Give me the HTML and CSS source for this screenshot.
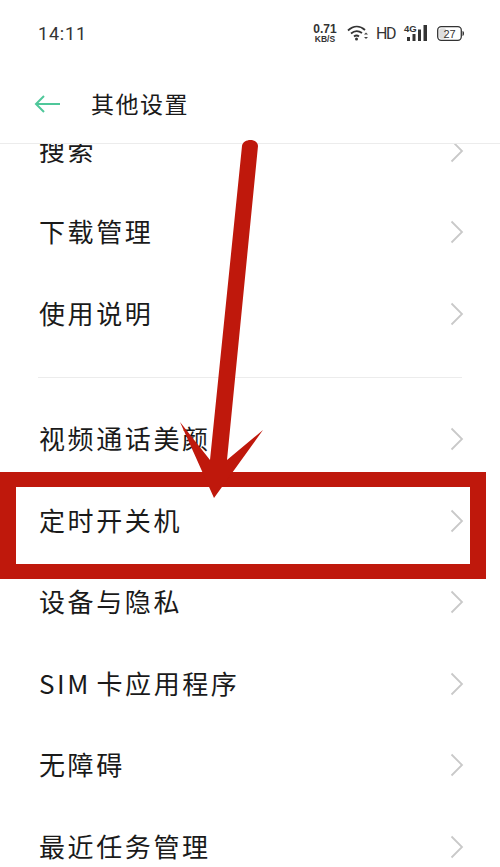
FILE: index.html
```html
<!DOCTYPE html>
<html lang="zh-CN">
<head>
<meta charset="utf-8">
<title>其他设置</title>
<link rel="stylesheet" href="styles.css">
</head>
<body>
<div class="phone">
  <div class="status">
    <span class="time">14:11</span>
    <div class="status-icons">
      <div class="speed"><b class="rate">0.71</b><b class="unit">KB/S</b></div>
      <svg class="wifi" width="22" height="16" viewBox="0 0 22 16"><path d="M1 5.500C6.500 0.500 13 0.500 18 5M4 8.500C7.500 5.500 11.500 5.500 15 8M7 11.500C8.500 10.300 10.500 10.300 12 11.500" fill="none" stroke="#333" stroke-width="1.800"/><circle cx="9.500" cy="14" r="1.500" fill="#333"/><path d="M17 9.500l2-2 2 2zM17 12l2 2 2-2z" fill="#444"/></svg>
      <span class="hd">HD</span>
      <div class="signal">
        <span class="g4">4G</span>
        <svg width="22" height="16" viewBox="0 0 22 16"><path d="M2 12h3v4H2zM7.500 9h3v7h-3zM13 4.500h3V16h-3zM18.500 0H22v16h-3.500z" fill="#333"/></svg>
      </div>
      <svg class="battery" width="27" height="15" viewBox="0 0 27 15"><rect x="0.700" y="0.700" width="23.600" height="13.600" rx="3.500" fill="none" stroke="#333" stroke-width="1.300"/><rect x="2.200" y="2.200" width="7" height="10.600" rx="2" fill="#ddd"/><path d="M25.500 5v5c1-.3 1.500-1.200 1.500-2.500s-.5-2.200-1.500-2.500z" fill="#333"/><text x="12.500" y="12" text-anchor="middle" class="batt-text">27</text></svg>
    </div>
  </div>
  <header class="bar">
    <svg class="back" width="28" height="20" viewBox="0 0 28 20"><path d="M27 10H3M11 2l-8 8 8 8" fill="none" stroke="#4fc79a" stroke-width="2"/></svg>
    <h1>其他设置</h1>
  </header>
  <main class="viewport">
    <div class="list">
      <div class="row"><span>搜索</span><svg class="chev" viewBox="0 0 14 24"><path d="M1.500 1.500L12 12 1.500 22.500"/></svg></div>
      <div class="row"><span>下载管理</span><svg class="chev" viewBox="0 0 14 24"><path d="M1.500 1.500L12 12 1.500 22.500"/></svg></div>
      <div class="row"><span>使用说明</span><svg class="chev" viewBox="0 0 14 24"><path d="M1.500 1.500L12 12 1.500 22.500"/></svg></div>
      <div class="divider"></div>
      <div class="row"><span>视频通话美颜</span><svg class="chev" viewBox="0 0 14 24"><path d="M1.500 1.500L12 12 1.500 22.500"/></svg></div>
      <div class="row"><span>定时开关机</span><svg class="chev" viewBox="0 0 14 24"><path d="M1.500 1.500L12 12 1.500 22.500"/></svg></div>
      <div class="row"><span>设备与隐私</span><svg class="chev" viewBox="0 0 14 24"><path d="M1.500 1.500L12 12 1.500 22.500"/></svg></div>
      <div class="row"><span>SIM 卡应用程序</span><svg class="chev" viewBox="0 0 14 24"><path d="M1.500 1.500L12 12 1.500 22.500"/></svg></div>
      <div class="row"><span>无障碍</span><svg class="chev" viewBox="0 0 14 24"><path d="M1.500 1.500L12 12 1.500 22.500"/></svg></div>
      <div class="row"><span>最近任务管理</span><svg class="chev" viewBox="0 0 14 24"><path d="M1.500 1.500L12 12 1.500 22.500"/></svg></div>
    </div>
  </main>
  <div class="highlight"></div>
  <svg class="arrow" width="500" height="867" viewBox="0 0 500 867"><path d="M242 146C243 138 258 138 258 146L227 460L263 430L214 498L180 422L210 460Z" fill="#bf180c"/></svg>
</div>
</body>
</html>
```
FILE: styles.css
```css
html, body {
  margin: 0;
  padding: 0;
  background: #fff;
}
.phone {
  position: relative;
  width: 500px;
  height: 867px;
  overflow: hidden;
  background: #fff;
  font-family: "Noto Sans CJK SC", "Noto Sans", sans-serif;
  color: #1a1a1a;
}
.status {
  height: 66px;
  box-sizing: border-box;
  padding: 0 36px 0 38px;
  display: flex;
  align-items: center;
  justify-content: space-between;
}
.time {
  font-family: Roboto, sans-serif;
  font-size: 18px;
  letter-spacing: 0.800px;
  color: #333;
}
.status-icons {
  display: flex;
  align-items: center;
}
.speed {
  display: flex;
  flex-direction: column;
  align-items: center;
  width: 24px;
  font-family: "Liberation Sans", sans-serif;
  color: #333;
}
.rate {
  font-size: 12px;
  line-height: 12px;
}
.unit {
  font-size: 8.500px;
  line-height: 9px;
}
.wifi {
  margin-left: 10px;
}
.hd {
  margin-left: 7px;
  font-family: Roboto, sans-serif;
  font-size: 16px;
  letter-spacing: -1.500px;
  color: #333;
  width: 20px;
}
.signal {
  position: relative;
  display: flex;
  align-items: flex-end;
  justify-content: flex-end;
  width: 23px;
  height: 16px;
  margin-left: 8px;
}
.g4 {
  position: absolute;
  left: 0;
  top: -1px;
  font-family: "Liberation Sans", sans-serif;
  font-weight: bold;
  font-size: 9.500px;
  line-height: 9px;
  color: #333;
}
.battery {
  margin-left: 10px;
}
.batt-text {
  font-family: "Liberation Sans", sans-serif;
  font-size: 11px;
  fill: #333;
}
.bar {
  height: 78px;
  box-sizing: border-box;
  padding: 0 0 2px 33px;
  display: flex;
  align-items: center;
  gap: 30px;
  border-bottom: 1px solid #ececec;
}
.bar h1 {
  margin: 0;
  padding-bottom: 2px;
  font-size: 23px;
  font-weight: 400;
  letter-spacing: 1.500px;
  line-height: 30px;
}
.viewport {
  height: 723px;
  overflow: hidden;
}
.list {
  margin-top: -34px;
}
.row {
  height: 81.500px;
  box-sizing: border-box;
  padding: 0 36px 0 39px;
  display: flex;
  align-items: center;
  justify-content: space-between;
  font-size: 26px;
  letter-spacing: 2.600px;
  word-spacing: -3px;
}
.row span {
  padding-bottom: 3px;
}
.chev {
  width: 14px;
  height: 24px;
  flex: none;
}
.chev path {
  fill: none;
  stroke: #c9c9c9;
  stroke-width: 1.800;
}
.divider {
  height: 1px;
  margin: 22px 38px 21px;
  background: #ececec;
}
.highlight {
  position: absolute;
  left: 0;
  top: 472px;
  width: 486px;
  height: 107px;
  box-sizing: border-box;
  border: solid #bf180c;
  border-width: 15px 16px;
}
.arrow {
  position: absolute;
  left: 0;
  top: 0;
}
```
